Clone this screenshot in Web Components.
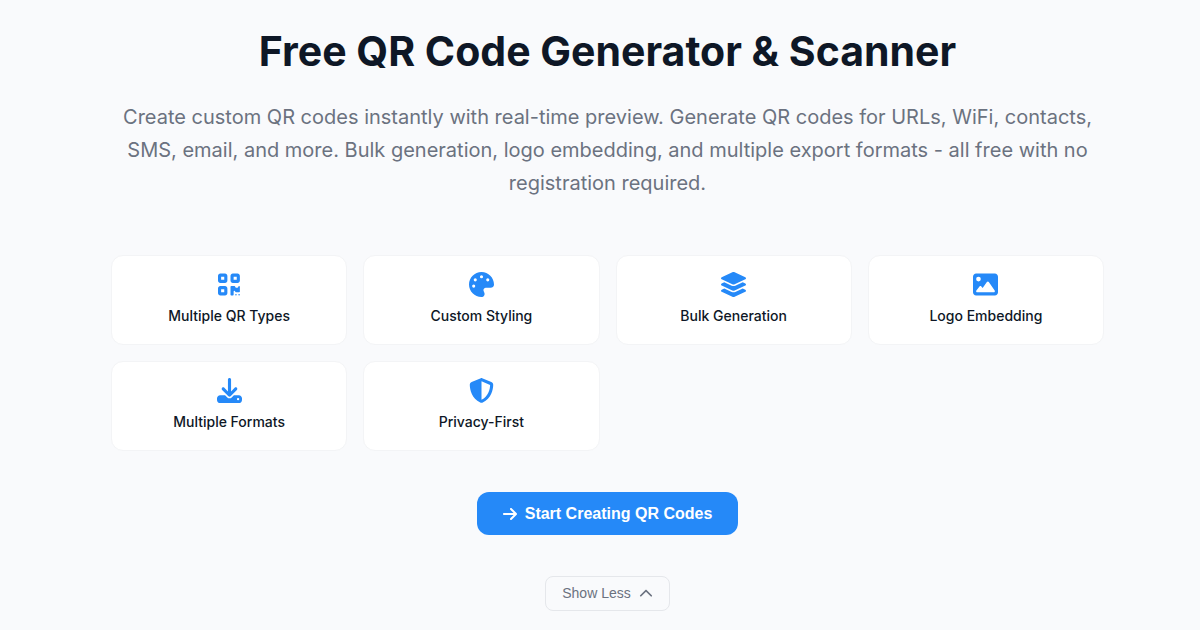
<!DOCTYPE html>
<html lang="en">
<head>
<meta charset="utf-8">
<meta name="viewport" content="width=device-width, initial-scale=1">
<title>Free QR Code Generator &amp; Scanner</title>
<style>
  body { margin: 0; background: #f9fafc; color: #0e1726; font-family: Inter, sans-serif; }
</style>
</head>
<body>
<qr-hero>
  <span slot="title">Free QR Code Generator &amp; Scanner</span>
  <span slot="lead">Create custom QR codes instantly with real-time preview. Generate QR codes for URLs, WiFi, contacts, SMS, email, and more. Bulk generation, logo embedding, and multiple export formats - all free with no registration required.</span>
  <feature-card icon="qrcode">Multiple QR Types</feature-card>
  <feature-card icon="palette">Custom Styling</feature-card>
  <feature-card icon="layers">Bulk Generation</feature-card>
  <feature-card icon="image">Logo Embedding</feature-card>
  <feature-card icon="download">Multiple Formats</feature-card>
  <feature-card icon="shield">Privacy-First</feature-card>
  <action-button slot="actions" variant="primary" icon="arrow">Start Creating QR Codes</action-button>
  <action-button slot="actions" variant="outline" icon="chevron">Show Less</action-button>
</qr-hero>
<script>
const ICONS = {
  qrcode: ['0 0 448 512', 'M0 80C0 53.5 21.5 32 48 32h96c26.5 0 48 21.5 48 48v96c0 26.5-21.5 48-48 48H48c-26.5 0-48-21.5-48-48V80zM64 96v64h64V96H64zM0 336c0-26.5 21.5-48 48-48h96c26.5 0 48 21.5 48 48v96c0 26.5-21.5 48-48 48H48c-26.5 0-48-21.5-48-48V336zm64 16v64h64V352H64zM304 32h96c26.5 0 48 21.5 48 48v96c0 26.5-21.5 48-48 48H304c-26.5 0-48-21.5-48-48V80c0-26.5 21.5-48 48-48zm80 64H320v64h64V96zM256 304c0-8.8 7.2-16 16-16h64c8.8 0 16 7.2 16 16s7.2 16 16 16h32c8.8 0 16-7.2 16-16s7.2-16 16-16s16 7.2 16 16v96c0 8.8-7.2 16-16 16H368c-8.8 0-16-7.2-16-16s-7.2-16-16-16s-16 7.2-16 16v64c0 8.8-7.2 16-16 16H272c-8.8 0-16-7.2-16-16V304zM368 480a16 16 0 1 1 0-32 16 16 0 1 1 0 32zm64 0a16 16 0 1 1 0-32 16 16 0 1 1 0 32z'],
  palette: ['0 0 512 512', 'M512 256c0 .9 0 1.8 0 2.7c-.4 36.5-33.6 61.3-70.1 61.3L344 320c-26.5 0-48 21.5-48 48c0 3.4 .4 6.7 1 9.9c2.1 10.2 6.5 20 10.8 29.9c6.1 13.8 12.1 27.5 12.1 42c0 31.8-21.6 60.7-53.4 62c-3.5 .1-7 .2-10.6 .2C114.6 512 0 397.4 0 256S114.6 0 256 0S512 114.6 512 256zM128 288a32 32 0 1 0 -64 0 32 32 0 1 0 64 0zm0-96a32 32 0 1 0 0-64 32 32 0 1 0 0 64zM288 96a32 32 0 1 0 -64 0 32 32 0 1 0 64 0zm96 96a32 32 0 1 0 0-64 32 32 0 1 0 0 64z'],
  layers: ['32 0 512 512', 'M264.5 5.2c14.9-6.9 32.1-6.9 47 0l218.6 101c8.5 3.9 13.9 12.4 13.9 21.8s-5.4 17.9-13.9 21.8l-218.6 101c-14.9 6.9-32.1 6.9-47 0L45.9 149.8C37.4 145.8 32 137.3 32 128s5.4-17.9 13.9-21.8L264.5 5.2zM476.9 209.6l53.2 24.6c8.5 3.9 13.9 12.4 13.9 21.8s-5.4 17.9-13.9 21.8l-218.6 101c-14.9 6.9-32.1 6.9-47 0L45.9 277.8C37.4 273.8 32 265.3 32 256s5.4-17.9 13.9-21.8l53.2-24.6 152 70.2c23.4 10.8 50.4 10.8 73.8 0l152-70.2zm-152 198.2l152-70.2 53.2 24.6c8.5 3.9 13.9 12.4 13.9 21.8s-5.4 17.9-13.9 21.8l-218.6 101c-14.9 6.9-32.1 6.9-47 0L45.9 405.8C37.4 401.8 32 393.3 32 384s5.4-17.9 13.9-21.8l53.2-24.6 152 70.2c23.4 10.8 50.4 10.8 73.8 0z'],
  image: ['0 0 512 512', 'M0 96C0 60.7 28.7 32 64 32H448c35.3 0 64 28.7 64 64V416c0 35.3-28.7 64-64 64H64c-35.3 0-64-28.7-64-64V96zM323.8 202.5c-4.5-6.6-11.9-10.5-19.8-10.5s-15.4 3.9-19.8 10.5l-87 127.6L170.7 297c-4.6-5.7-11.5-9-18.7-9s-14.2 3.3-18.7 9l-64 80c-5.8 7.2-6.9 17.1-2.9 25.4s12.4 13.6 21.6 13.6h96 32H424c8.9 0 17.1-4.9 21.2-12.8s3.6-17.4-1.4-24.7l-120-176zM112 192a48 48 0 1 0 0-96 48 48 0 1 0 0 96z'],
  download: ['0 0 512 512', 'M288 32c0-17.7-14.3-32-32-32s-32 14.3-32 32V274.7l-73.4-73.4c-12.5-12.5-32.8-12.5-45.3 0s-12.5 32.8 0 45.3l128 128c12.5 12.5 32.8 12.5 45.3 0l128-128c12.5-12.5 12.5-32.8 0-45.3s-32.8-12.5-45.3 0L288 274.7V32zM64 352c-35.3 0-64 28.7-64 64v32c0 35.3 28.7 64 64 64H448c35.3 0 64-28.7 64-64V416c0-35.3-28.7-64-64-64H346.5l-45.3 45.3c-25 25-65.5 25-90.5 0L165.5 352H64zm368 56a24 24 0 1 1 0 48 24 24 0 1 1 0-48z'],
  shield: ['0 0 512 512', 'M256 0c4.6 0 9.2 1 13.4 2.9L457.7 82.8c22 9.3 38.4 31 38.3 57.2c-.5 99.2-41.3 280.7-213.6 363.2c-16.7 8-36.1 8-52.8 0C57.3 420.7 16.5 239.2 16 140c-.1-26.2 16.3-47.9 38.3-57.2L242.7 2.9C246.8 1 251.4 0 256 0zm0 66.8V444.8C394 378 431.1 230.1 432 141.4L256 66.8z'],
  arrow: ['0 0 448 512', 'M438.6 278.6c12.5-12.5 12.5-32.8 0-45.3l-160-160c-12.5-12.5-32.8-12.5-45.3 0s-12.5 32.8 0 45.3L338.8 224 32 224c-17.7 0-32 14.3-32 32s14.3 32 32 32l306.7 0L233.4 393.4c-12.5 12.5-12.5 32.8 0 45.3s32.8 12.5 45.3 0l160-160z'],
  chevron: ['0 0 512 512', 'M233.4 105.4c12.5-12.5 32.8-12.5 45.3 0l192 192c12.5 12.5 12.5 32.8 0 45.3s-32.8 12.5-45.3 0L256 173.3 86.6 342.6c-12.5 12.5-32.8 12.5-45.3 0s-12.5-32.8 0-45.3l192-192z']
};

class UiIcon extends HTMLElement {
  connectedCallback() {
    if (this.shadowRoot) return;
    const [box, path] = ICONS[this.getAttribute('name')];
    this.attachShadow({ mode: 'open' }).innerHTML = `
      <style>
        :host { display: block; height: 1em; line-height: 1; }
        svg { display: block; height: 1em; fill: currentColor; }
      </style>
      <svg viewBox="${box}" aria-hidden="true"><path fill-rule="evenodd" d="${path}"/></svg>`;
  }
}

class FeatureCard extends HTMLElement {
  connectedCallback() {
    if (this.shadowRoot) return;
    this.attachShadow({ mode: 'open' }).innerHTML = `
      <style>
        :host {
          display: flex; flex-direction: column; align-items: center; gap: 7px;
          box-sizing: border-box; padding: 16px 16px 17px; background: #fff;
          border: 1px solid #f3f4f6; border-radius: 12px;
        }
        ui-icon { font-size: 25px; color: #2589f8; }
        .label { font-size: 14px; line-height: 23px; font-weight: 500; text-align: center; }
      </style>
      <ui-icon name="${this.getAttribute('icon')}"></ui-icon>
      <span class="label"><slot></slot></span>`;
  }
}

class ActionButton extends HTMLElement {
  connectedCallback() {
    if (this.shadowRoot) return;
    this.attachShadow({ mode: 'open' }).innerHTML = `
      <style>
        :host { display: block; }
        button {
          display: flex; align-items: center; gap: 8px; margin: 0; cursor: pointer;
          font-family: "Liberation Sans", Arial, sans-serif;
        }
        :host([variant="primary"]) button {
          padding: 12px 26px; border: 0; border-radius: 12px; background: #2589f8;
          color: #fff; font-size: 16px; line-height: 19px; font-weight: 600;
        }
        :host([variant="outline"]) button {
          padding: 8px 16px; border: 1px solid #e5e7eb; border-radius: 8px; background: transparent;
          color: #6b7280; font-size: 14px; line-height: 17px; flex-direction: row-reverse;
        }
      </style>
      <button type="button">
        <ui-icon name="${this.getAttribute('icon')}"></ui-icon>
        <span><slot></slot></span>
      </button>`;
  }
}

class QrHero extends HTMLElement {
  connectedCallback() {
    if (this.shadowRoot) return;
    this.attachShadow({ mode: 'open' }).innerHTML = `
      <style>
        :host { display: block; padding: 25px 96px 19px 111px; }
        h1 { margin: 0 0 23px; font-size: 41px; line-height: 53px; font-weight: 700; text-align: center; }
        p { margin: 0 0 55px; font-size: 20px; line-height: 33px; color: #6b7280; text-align: center; }
        .features { display: grid; grid-template-columns: repeat(4, 1fr); gap: 16px; }
        .actions { display: flex; flex-direction: column; align-items: center; gap: 41px; margin-top: 41px; }
      </style>
      <main>
        <h1><slot name="title"></slot></h1>
        <p><slot name="lead"></slot></p>
        <section class="features"><slot></slot></section>
        <div class="actions"><slot name="actions"></slot></div>
      </main>`;
  }
}

customElements.define('ui-icon', UiIcon);
customElements.define('feature-card', FeatureCard);
customElements.define('action-button', ActionButton);
customElements.define('qr-hero', QrHero);
</script>
</body>
</html>
